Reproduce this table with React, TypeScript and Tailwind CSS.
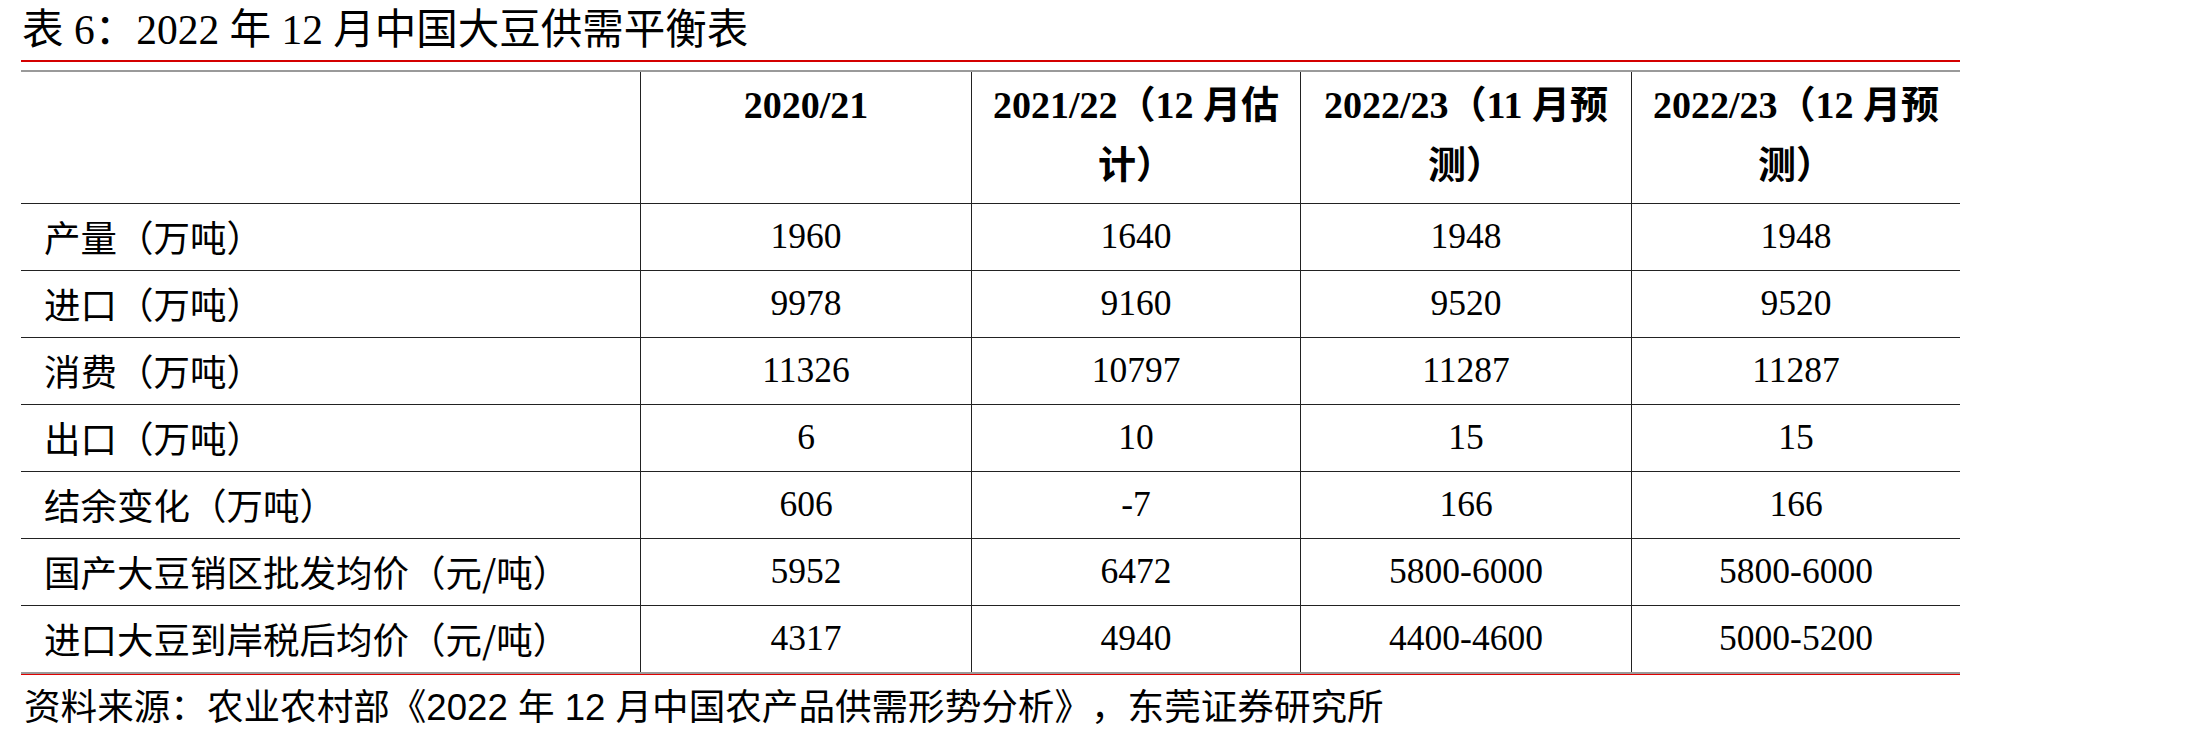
import React from "react";

const rows: string[][] = [
  ["产量（万吨）", "1960", "1640", "1948", "1948"],
  ["进口（万吨）", "9978", "9160", "9520", "9520"],
  ["消费（万吨）", "11326", "10797", "11287", "11287"],
  ["出口（万吨）", "6", "10", "15", "15"],
  ["结余变化（万吨）", "606", "-7", "166", "166"],
  ["国产大豆销区批发均价（元/吨）", "5952", "6472", "5800-6000", "5800-6000"],
  ["进口大豆到岸税后均价（元/吨）", "4317", "4940", "4400-4600", "5000-5200"],
];

const cols = "grid grid-cols-[619px_331px_329px_331px_329px]";

export default function App() {
  return (
    <div className="w-[2209px] h-[741px] bg-white pl-[21px] text-black overflow-hidden [text-spacing-trim:space-all]">
      <div className="w-[1939px]">
        <div className="h-[60px] flex items-center pl-[1px] text-[41.5px] whitespace-nowrap font-['Liberation_Serif','Noto_Sans_CJK_SC',serif]">
          表 6：2022 年 12 月中国大豆供需平衡表
        </div>
        <div className="h-[2px] bg-[#d40000]" />
        <div className="h-[8px]" />
        <div className="h-[2px] bg-[#9a9a9a]" />
        <div className={`${cols} h-[132px] border-b border-[#222]`}>
          <div />
          {[
            ["2020/21"],
            ["2021/22（12 月估", "计）"],
            ["2022/23（11 月预", "测）"],
            ["2022/23（12 月预", "测）"],
          ].map((lines, i) => (
            <div
              key={i}
              className="border-l border-[#222] pt-[3px] text-center text-[38px] font-bold leading-[60px] font-['Liberation_Serif','Noto_Sans_CJK_SC',serif]"
            >
              {lines.map((l, j) => (
                <div key={j} className="whitespace-nowrap">
                  {l}
                </div>
              ))}
            </div>
          ))}
        </div>
        {rows.map((r, i) => (
          <div
            key={i}
            className={`${cols} ${i < rows.length - 1 ? "h-[67px] border-b border-[#222]" : "h-[66px]"}`}
          >
            <div className="flex items-center pl-[23px] text-[36.5px] whitespace-nowrap font-['Noto_Sans_CJK_SC',sans-serif]">
              {r[0]}
            </div>
            {r.slice(1).map((v, j) => (
              <div
                key={j}
                className="border-l border-[#222] flex items-center justify-center text-[35.5px] font-['Liberation_Serif',serif]"
              >
                {v}
              </div>
            ))}
          </div>
        ))}
        <div className="h-[2px] bg-[#9a9a9a]" />
        <div className="h-[1px] bg-[#e00000]" />
        <div className="h-[66px] flex items-center pl-[3px] text-[36.6px] whitespace-nowrap font-['Liberation_Sans','Noto_Sans_CJK_SC',sans-serif]">
          资料来源：农业农村部《2022 年 12 月中国农产品供需形势分析》，东莞证券研究所
        </div>
      </div>
    </div>
  );
}
